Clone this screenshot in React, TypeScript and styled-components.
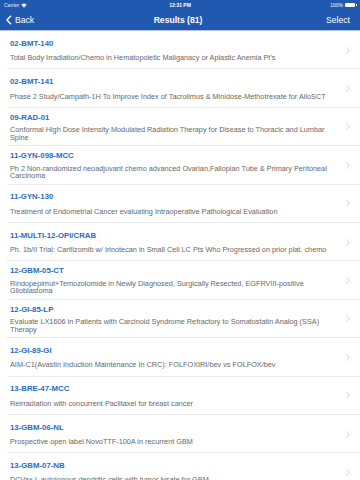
import React from 'react';
import styled, { createGlobalStyle } from 'styled-components';

const GlobalStyle = createGlobalStyle`
  html, body {
    margin: 0;
    padding: 0;
    background: #ffffff;
    font-family: "Liberation Sans", Arial, sans-serif;
  }
`;

const Page = styled.div`
  width: 360px;
  height: 480px;
  overflow: hidden;
  display: flex;
  flex-direction: column;
  background: #ffffff;
`;

const Header = styled.header`
  flex: none;
  background-color: #2159b1;
  border-bottom: 1px solid #b3c2de;
  height: 30px;
  display: flex;
  flex-direction: column;
  color: #fff;
`;

const StatusBar = styled.div`
  height: 10px;
  display: grid;
  grid-template-columns: 1fr auto 1fr;
  align-items: center;
  padding: 0 4px;
  font-size: 5px;
`;

const StatusLeft = styled.div`
  display: flex;
  align-items: center;
  gap: 2px;
  opacity: 0.9;
`;

const StatusTime = styled.div`
  font-weight: 700;
`;

const StatusRight = styled.div`
  display: flex;
  align-items: center;
  justify-content: flex-end;
  gap: 2px;
`;

const Battery = styled.span`
  display: inline-block;
  width: 10px;
  height: 4px;
  background: #fff;
  border-radius: 1px;
  position: relative;
  margin-right: 1px;

  &::after {
    content: '';
    position: absolute;
    right: -1.5px;
    top: 1px;
    width: 1px;
    height: 2px;
    background: #fff;
  }
`;

const NavBar = styled.nav`
  flex: 1;
  display: grid;
  grid-template-columns: 1fr auto 1fr;
  align-items: center;
  padding: 0 10px 0 6px;
  font-size: 8.6px;
`;

const BackButton = styled.div`
  display: flex;
  align-items: center;
  gap: 3px;
`;

const NavTitle = styled.div`
  font-weight: 700;
`;

const SelectButton = styled.div`
  text-align: right;
`;

const List = styled.div`
  flex: none;
  display: flex;
  flex-direction: column;
`;

const Row = styled.div`
  flex: none;
  height: 38.4px;
  box-sizing: border-box;
  display: flex;
  align-items: center;
  position: relative;
  padding: 0 10px 0 10px;

  &::after {
    content: '';
    position: absolute;
    left: 7px;
    right: 0;
    bottom: 0;
    height: 1px;
    background: #ececee;
  }
`;

const RowText = styled.div<{ $twoLine: boolean }>`
  flex: 1;
  display: flex;
  flex-direction: column;
  gap: ${(p) => (p.$twoLine ? '4.5px' : '6.5px')};
`;

const Code = styled.div`
  color: #2a6cbf;
  font-weight: 700;
  font-size: 7.8px;
  line-height: 9px;
`;

const Desc = styled.div`
  color: #686868;
  font-size: 7.3px;
  line-height: 7.5px;
  white-space: pre-line;
`;

const Chevron = styled.svg`
  flex: none;
  width: 4px;
  height: 7px;
`;

const trials = [
  { code: '02-BMT-140', desc: "Total Body Irradiation/Chemo in Hematopoietic Maliganacy or Aplastic Anemia Pt's" },
  { code: '02-BMT-141', desc: 'Phase 2 Study/Campath-1H To Improve Index of Tacrolimus & Minidose-Methotrexate for AlloSCT' },
  { code: '09-RAD-01', desc: 'Conformal High Dose Intensity Modulated Radiation Therapy for Disease to Thoracic and Lumbar\nSpine' },
  { code: '11-GYN-098-MCC', desc: 'Ph 2 Non-randomized neoadjuvant chemo advanced Ovarian,Fallopian Tube & Primary Peritoneal\nCarcinoma' },
  { code: '11-GYN-130', desc: 'Treatment of Endometrial Cancer evaluating Intraoperative Pathological Evaluation' },
  { code: '11-MULTI-12-OPI/CRAB', desc: 'Ph. 1b/II Trial: Carfilzomib w/ Irinotecan in Small Cell LC Pts Who Progressed on prior plat. chemo' },
  { code: '12-GBM-05-CT', desc: 'Rindopepimut+Temozolomide in Newly Diagnosed, Surgically Resected, EGFRVIII-positive\nGlioblastoma' },
  { code: '12-GI-85-LP', desc: 'Evaluate LX1606 in Patients with Carcinoid Syndrome Refractory to Somatostatin Analog (SSA)\nTherapy' },
  { code: '12-GI-89-GI', desc: 'AIM-C1(Avastin Induction Maintenance In CRC): FOLFOXIRI/bev vs FOLFOX/bev' },
  { code: '13-BRE-47-MCC', desc: 'Reirradiation with concurrent Paclitaxel for breast cancer' },
  { code: '13-GBM-06-NL', desc: 'Prospective open label NovoTTF-100A in recurrent GBM' },
  { code: '13-GBM-07-NB', desc: 'DCVax-L autologous dendritic cells with tumor lysate for GBM' },
];

const App: React.FC = () => {
  return (
    <Page>
      <GlobalStyle />
      <Header>
        <StatusBar>
          <StatusLeft>
            Carrier
            <svg width="6" height="5" viewBox="0 0 12 9">
              <path d="M6 9 L0.5 3 A8 8 0 0 1 11.5 3 Z" fill="#fff" />
            </svg>
          </StatusLeft>
          <StatusTime>12:31 PM</StatusTime>
          <StatusRight>
            100%
            <Battery />
          </StatusRight>
        </StatusBar>
        <NavBar>
          <BackButton>
            <svg width="6" height="10" viewBox="0 0 6 10">
              <path d="M5 0.8 L1 5 L5 9.2" stroke="#fff" strokeWidth="1.4" fill="none" />
            </svg>
            Back
          </BackButton>
          <NavTitle>Results (81)</NavTitle>
          <SelectButton>Select</SelectButton>
        </NavBar>
      </Header>
      <List>
        {trials.map((t) => {
          const twoLine = t.desc.includes('\n');
          return (
            <Row key={t.code}>
              <RowText $twoLine={twoLine}>
                <Code>{t.code}</Code>
                <Desc>{t.desc}</Desc>
              </RowText>
              <Chevron viewBox="0 0 4 7">
                <path d="M0.5 0.5 L3.3 3.5 L0.5 6.5" stroke="#c7c7cc" strokeWidth="0.8" fill="none" />
              </Chevron>
            </Row>
          );
        })}
      </List>
    </Page>
  );
};

export default App;
